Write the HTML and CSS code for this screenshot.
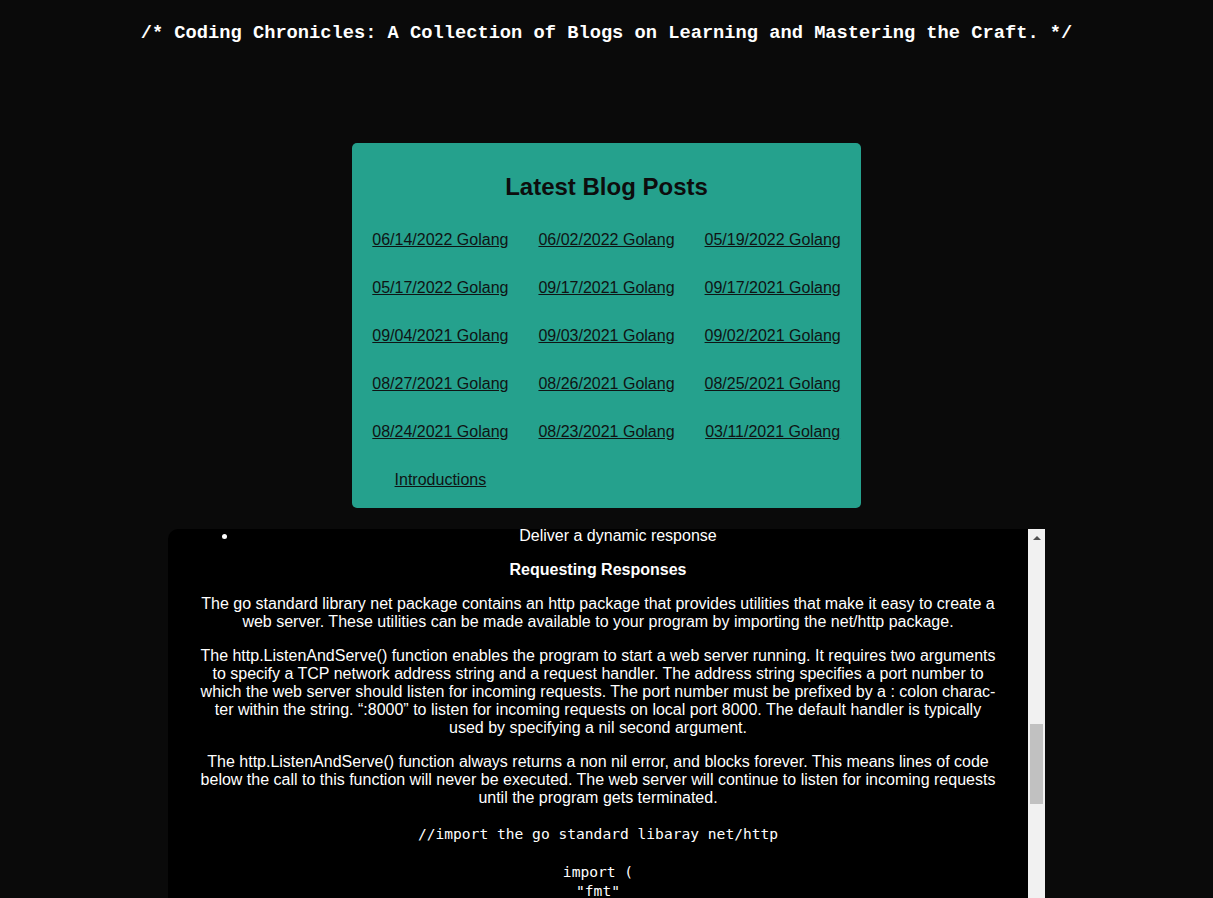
FILE: index.html
```html
<!DOCTYPE html>
<html lang="en">
<head>
<meta charset="utf-8">
<title>Coding Chronicles</title>
<link rel="stylesheet" href="styles.css">
</head>
<body>
<header class="site-header">
  <h1 class="site-title">/* Coding Chronicles: A Collection of Blogs on Learning and Mastering the Craft. */</h1>
</header>

<main class="page">
  <section class="posts-card">
    <h2 class="posts-title">Latest Blog Posts</h2>
    <nav class="posts-grid">
      <a href="#">06/14/2022 Golang</a>
      <a href="#">06/02/2022 Golang</a>
      <a href="#">05/19/2022 Golang</a>
      <a href="#">05/17/2022 Golang</a>
      <a href="#">09/17/2021 Golang</a>
      <a href="#">09/17/2021 Golang</a>
      <a href="#">09/04/2021 Golang</a>
      <a href="#">09/03/2021 Golang</a>
      <a href="#">09/02/2021 Golang</a>
      <a href="#">08/27/2021 Golang</a>
      <a href="#">08/26/2021 Golang</a>
      <a href="#">08/25/2021 Golang</a>
      <a href="#">08/24/2021 Golang</a>
      <a href="#">08/23/2021 Golang</a>
      <a href="#">03/11/2021 Golang</a>
      <a href="#">Introductions</a>
    </nav>
  </section>

  <div class="post-frame">
    <article class="post">
      <ul class="post-list">
        <li>Deliver a dynamic response</li>
      </ul>
      <h4 class="post-subtitle">Requesting Responses</h4>
      <p>The go standard library net package contains an http package that provides utilities that make it easy to create a web server. These utilities can be made available to your program by importing the net/http package.</p>
      <p>The http.ListenAndServe() function enables the program to start a web server running. It requires two arguments to specify a TCP network address string and a request handler. The address string specifies a port number to which the web server should listen for incoming requests. The port number must be prefixed by a : colon charac&shy;ter within the string. “:8000” to listen for incoming requests on local port 8000. The default handler is typically used by specifying a nil second argument.</p>
      <p>The http.ListenAndServe() function always returns a non nil error, and blocks forever. This means lines of code below the call to this function will never be executed. The web server will continue to listen for incoming requests until the program gets terminated.</p>
<pre class="code">//import the go standard libaray net/http

import (
"fmt"</pre>
    </article>
    <div class="scrollbar" aria-hidden="true">
      <div class="scroll-up"><span class="scroll-arrow"></span></div>
      <div class="scroll-thumb"></div>
    </div>
  </div>
</main>
</body>
</html>
```

FILE: styles.css
```css
html, body {
  margin: 0;
  padding: 0;
}

body {
  background: #0a0a0a;
  color: #fff;
  font-family: "Liberation Sans", Arial, sans-serif;
  height: 100vh;
  overflow: hidden;
}

.site-header {
  padding-top: 22px;
}

.site-title {
  margin: 0;
  font-family: "Liberation Mono", "Courier New", monospace;
  font-size: 18.72px;
  line-height: 22px;
  font-weight: bold;
  text-align: center;
  color: #fff;
}

.page {
  display: flex;
  flex-direction: column;
  align-items: center;
}

.posts-card {
  margin-top: 99px;
  width: 509px;
  box-sizing: border-box;
  padding: 20px 20px 19px;
  background: #25a18d;
  border-radius: 5px;
  color: #111;
}

.posts-title {
  margin: 10px 0 30px;
  font-size: 24px;
  line-height: 28px;
  font-weight: bold;
  text-align: center;
  color: #0d0d0d;
}

.posts-grid {
  display: grid;
  grid-template-columns: repeat(3, max-content);
  justify-content: center;
  justify-items: center;
  column-gap: 30px;
  row-gap: 30px;
  font-size: 16px;
  line-height: 18px;
}

.posts-grid a {
  color: #0f1414;
  text-decoration: underline;
}

.post-frame {
  display: flex;
  margin-top: 21px;
  width: 877px;
  height: 400px;
  background: #000;
  border-radius: 10px 0 0 10px;
  overflow: hidden;
}

.post {
  flex: 1;
  min-width: 0;
  padding: 0 30px;
  overflow: hidden;
  color: #fff;
  font-size: 16px;
  line-height: 18px;
  text-align: center;
}

.post p {
  margin: 16px 0;
}

.post-list {
  margin: -2px 0 16px;
  padding-left: 40px;
}

.post-subtitle {
  margin: 16px 0;
  font-size: 16px;
  line-height: 18px;
  font-weight: bold;
}

.code {
  margin: 17px 0 16px;
  font-family: "DejaVu Sans Mono", Consolas, monospace;
  font-size: 14.6px;
  line-height: 19px;
  white-space: pre;
  text-align: center;
  color: #fff;
}

.scrollbar {
  flex: 0 0 17px;
  display: flex;
  flex-direction: column;
  background: #f1f1f1;
}

.scroll-up {
  flex: 0 0 17px;
  display: flex;
  align-items: center;
  justify-content: center;
}

.scroll-arrow {
  width: 0;
  height: 0;
  border-left: 4px solid transparent;
  border-right: 4px solid transparent;
  border-bottom: 4px solid #505050;
}

.scroll-thumb {
  flex: 0 0 80px;
  margin: 178px 2px 0;
  background: #c1c1c1;
}
```
